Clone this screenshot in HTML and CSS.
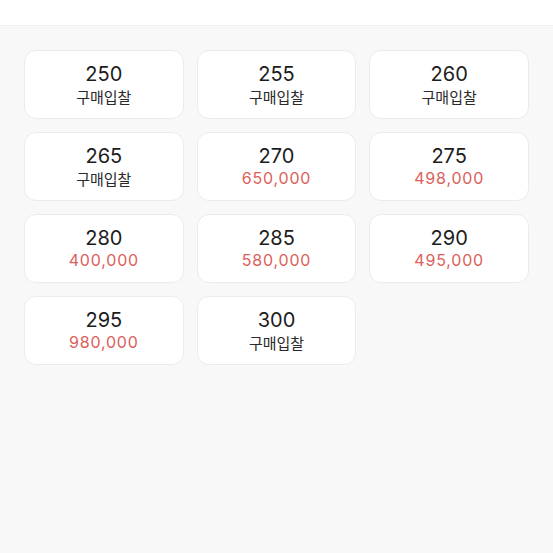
FILE: index.html
```html
<!DOCTYPE html>
<html lang="ko">
<head>
    <meta charset="UTF-8">
    <meta name="viewport" content="width=device-width, initial-scale=1.0">
    <title>사이즈 선택</title>
    <link rel="stylesheet" href="styles.css">
</head>
<body>
    <div class="top-bar"></div>

    <div class="size-grid">
        <div class="size-card"><div class="size">250</div><div class="label">구매입찰</div></div>
        <div class="size-card"><div class="size">255</div><div class="label">구매입찰</div></div>
        <div class="size-card"><div class="size">260</div><div class="label">구매입찰</div></div>
        <div class="size-card"><div class="size">265</div><div class="label">구매입찰</div></div>
        <div class="size-card"><div class="size">270</div><div class="price">650,000</div></div>
        <div class="size-card"><div class="size">275</div><div class="price">498,000</div></div>
        <div class="size-card"><div class="size">280</div><div class="price">400,000</div></div>
        <div class="size-card"><div class="size">285</div><div class="price">580,000</div></div>
        <div class="size-card"><div class="size">290</div><div class="price">495,000</div></div>
        <div class="size-card"><div class="size">295</div><div class="price">980,000</div></div>
        <div class="size-card"><div class="size">300</div><div class="label">구매입찰</div></div>
    </div>
</body>
</html>
```

FILE: styles.css
```css
body {
    font-family: Inter, "Noto Sans CJK KR", sans-serif;
    margin: 0;
    padding: 0;
    background-color: #f8f8f8;
    color: #222;
    height: 553px;
}
.top-bar {
    height: 25px;
    background-color: #fff;
    border-bottom: 1px solid #efefef;
}
.size-grid {
    display: grid;
    grid-template-columns: repeat(3, 1fr);
    column-gap: 13px;
    row-gap: 13px;
    padding: 24px 24px 0 24px;
}
.size-card {
    background: #fff;
    border: 1px solid #ebebeb;
    border-radius: 12px;
    height: 67px;
    display: flex;
    flex-direction: column;
    align-items: center;
    justify-content: center;
}
.size {
    font-size: 20px;
    line-height: 24px;
    color: #1c1c1c;
}
.label {
    font-family: "Noto Sans CJK KR", sans-serif;
    font-size: 15px;
    line-height: 21px;
    color: #2a2a2a;
}
.price {
    font-size: 16px;
    line-height: 21px;
    letter-spacing: 0.8px;
    color: #dc605a;
}
```
